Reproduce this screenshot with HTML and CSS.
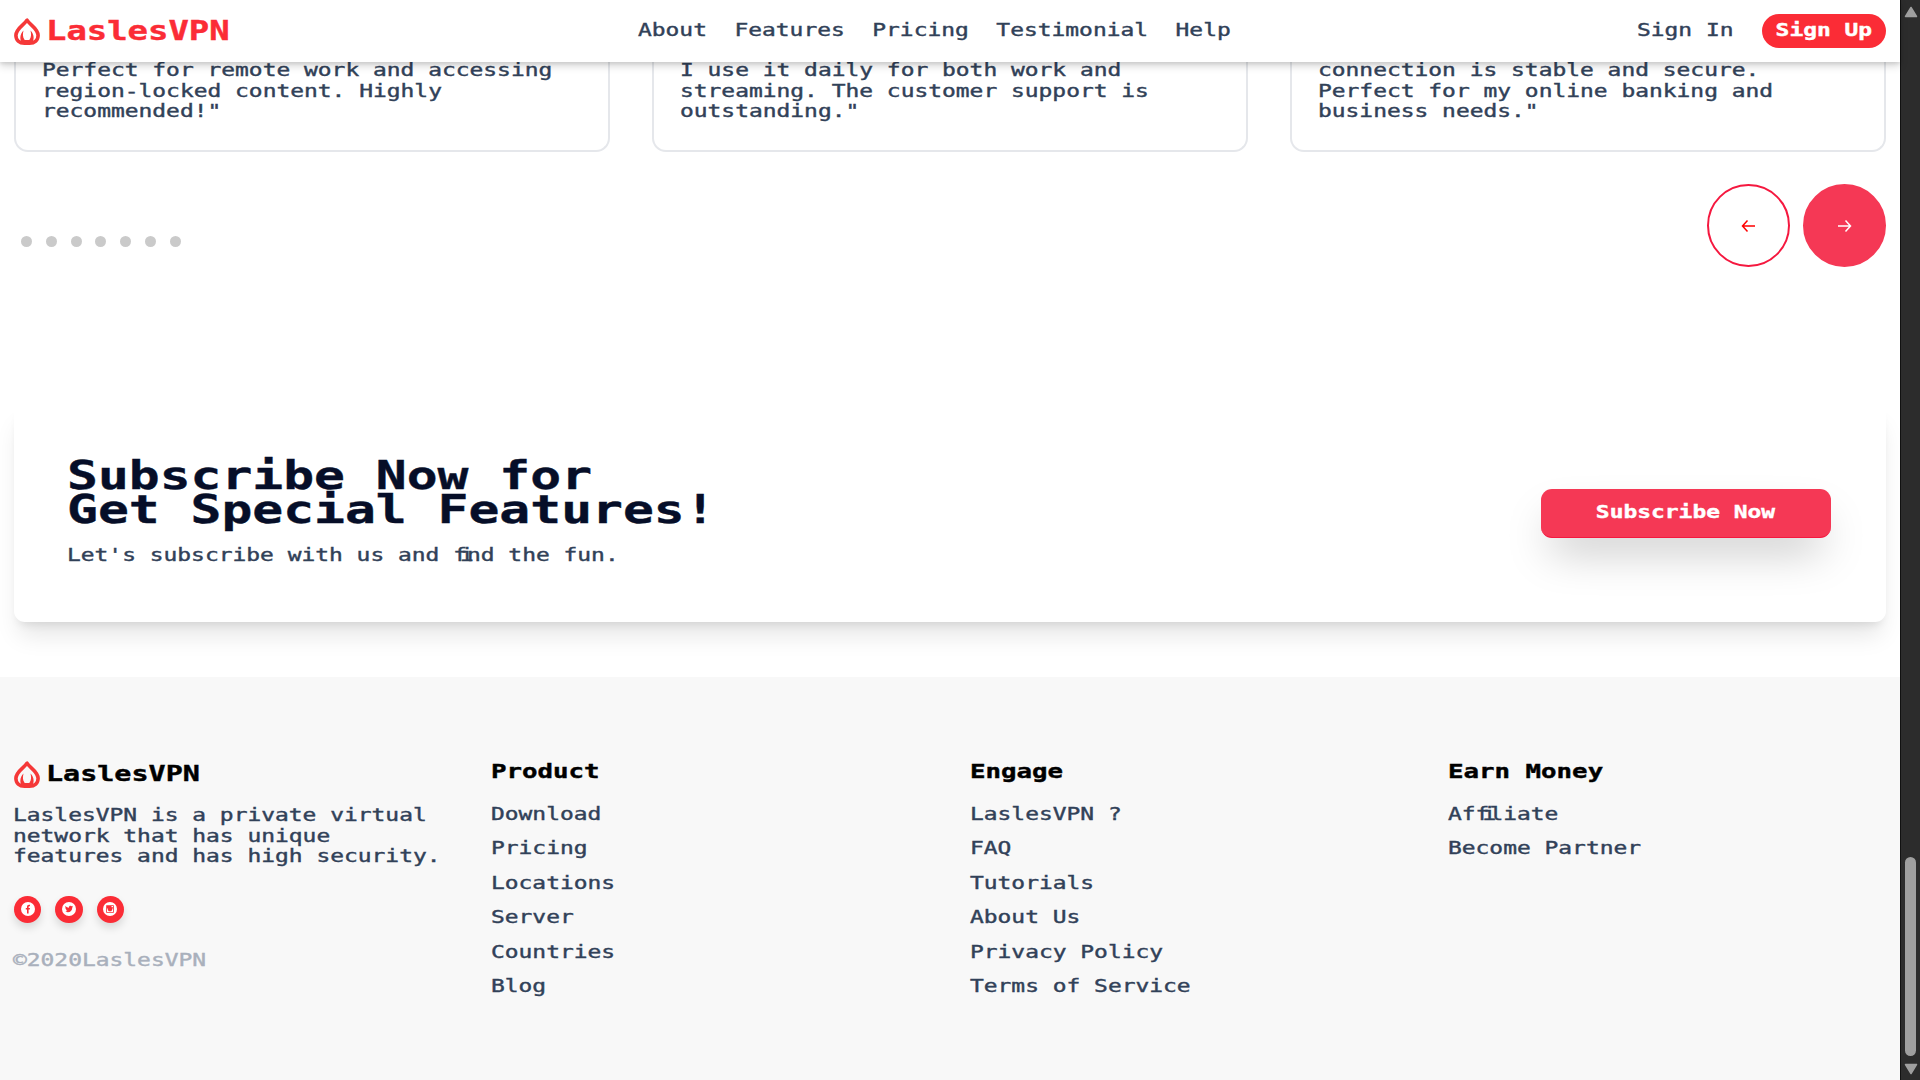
FILE: index.html
```html
<!DOCTYPE html>
<html lang="en">
<head>
<meta charset="utf-8">
<title>LaslesVPN</title>
<link rel="stylesheet" href="styles.css">
</head>
<body>
<svg class="defs" width="0" height="0">
  <symbol id="flame" viewBox="0 0 26 27">
    <path d="M13 2.200C10.500 6.500 1.900 10.500 1.900 17.300c0 5 3.500 7.900 8.500 7.900h5.200c5 0 8.500-2.900 8.500-7.900C24.100 10.500 15.500 6.500 13 2.200z" fill="none" stroke="currentColor" stroke-width="3.600" stroke-linejoin="round"/>
    <path d="M9.500 12.500C5.500 16.500 5.500 22 8.500 26h9c3-4 3-9.500-1-13.500.8 3.500 1 6.500-1.200 9.500h-4.600C8.500 19 8.700 16 9.500 12.500z" fill="currentColor"/>
  </symbol>
</svg>
<div class="screen">
  <div class="page">
    <header class="header">
      <a class="brand"><svg class="flame"><use href="#flame"/></svg><span class="type brand-name">LaslesVPN</span></a>
      <nav class="type nav"><a>About</a><a>Features</a><a>Pricing</a><a>Testimonial</a><a>Help</a></nav>
      <div class="auth"><a class="type sign-in">Sign In</a><a class="sign-up"><span class="type">Sign Up</span></a></div>
    </header>
    <main class="main">
      <section class="cards">
        <article class="card"><p class="type">Perfect for remote work and accessing<br>region-locked content. Highly<br>recommended!"</p></article>
        <article class="card"><p class="type">I use it daily for both work and<br>streaming. The customer support is<br>outstanding."</p></article>
        <article class="card"><p class="type">connection is stable and secure.<br>Perfect for my online banking and<br>business needs."</p></article>
      </section>
      <section class="pager">
        <div class="dots"><i></i><i></i><i></i><i></i><i></i><i></i><i></i></div>
        <div class="arrows">
          <button class="arrow prev"><svg viewBox="0 0 14 14"><path d="M13.500 7H1M6 1.500L1 7l5 5.500"/></svg></button>
          <button class="arrow next"><svg viewBox="0 0 14 14"><path d="M.5 7H13M8 1.500L13 7l-5 5.500"/></svg></button>
        </div>
      </section>
      <section class="subscribe">
        <div>
          <h2 class="type">Subscribe Now for<br>Get Special Features!</h2>
          <p class="type">Let's subscribe with us and <span class="lig">fi</span>nd the fun.</p>
        </div>
        <button class="subscribe-button"><span class="type">Subscribe Now</span></button>
      </section>
    </main>
    <footer class="footer">
      <div class="about">
        <a class="brand"><svg class="flame"><use href="#flame"/></svg><span class="type brand-name">LaslesVPN</span></a>
        <p class="type">LaslesVPN is a private virtual<br>network that has unique<br>features and has high security.</p>
        <div class="socials">
          <a><svg viewBox="0 0 14 14"><circle cx="7" cy="7" r="7"/><path d="M6 11.500V7.600H4.800V6H6V4.800C6 3.400 6.800 2.700 8 2.700h1v1.500h-.7c-.5 0-.7.3-.7.8v1H9l-.2 1.600H7.600v3.900z"/></svg></a>
          <a><svg viewBox="0 0 14 14"><circle cx="7" cy="7" r="7"/><path d="M3.500 4c1 1.100 2.100 1.600 3.400 1.700C6.800 4.300 7.700 3.700 8.500 3.700c.5 0 .9.200 1.200.5l1-.4-.4.9.7-.1-.7.800c0 3-2 4.900-4.400 4.900-.9 0-1.800-.3-2.500-.8.8 0 1.500-.2 2-.7-.8-.1-1.200-.5-1.400-1.100h.6c-.8-.3-1.200-.9-1.200-1.700l.6.2c-.7-.6-.9-1.400-.5-2.200z"/></svg></a>
          <a><svg viewBox="0 0 14 14"><circle cx="7" cy="7" r="7"/><path fill-rule="evenodd" d="M3.200 3.200h7.600v7.600H3.200zM4 6.400V10h6V6.400H9.200a2.300 2.300 0 1 1-4.400 0zM8.500 3.900v1.300H10V3.900z"/></svg></a>
        </div>
        <p class="type copyright">©2020LaslesVPN</p>
      </div>
      <div class="links">
        <h3 class="type">Product</h3>
        <ul class="type"><li>Download</li><li>Pricing</li><li>Locations</li><li>Server</li><li>Countries</li><li>Blog</li></ul>
      </div>
      <div class="links">
        <h3 class="type">Engage</h3>
        <ul class="type"><li>LaslesVPN ?</li><li>FAQ</li><li>Tutorials</li><li>About Us</li><li>Privacy Policy</li><li>Terms of Service</li></ul>
      </div>
      <div class="links">
        <h3 class="type">Earn Money</h3>
        <ul class="type"><li>Af<span class="lig">fi</span>liate</li><li>Become Partner</li></ul>
      </div>
    </footer>
  </div>
  <aside class="scrollbar">
    <svg viewBox="0 0 14 12"><path d="M7 1.500L12.500 10.500H1.500z"/></svg>
    <div class="thumb"></div>
    <svg viewBox="0 0 14 12"><path d="M7 10.500L12.500 1.500H1.500z"/></svg>
  </aside>
</div>
</body>
</html>
```
FILE: styles.css
```css
* { box-sizing: border-box; margin: 0; padding: 0; }
body {
  font: 17.5px/20.5px "DejaVu Sans Mono", monospace;
  color: #314158;
  background: #fff;
  overflow: hidden;
}
button { border: 0; font: inherit; }
ul { list-style: none; }
.defs { display: block; }

/* Wide letterforms: every run of text is widened from its left edge. */
.type {
  display: block;
  width: max-content;
  white-space: nowrap;
  transform: scaleX(1.309);
  transform-origin: left;
  -webkit-text-stroke: 0.4px currentColor;
}
.lig { letter-spacing: -0.301em; }

.screen { display: flex; width: 1920px; height: 1080px; }
.page { display: flex; flex-direction: column; width: 1900px; }

.header {
  position: relative;
  z-index: 1;
  display: grid;
  grid-template-columns: 624px 1fr 249px;
  align-items: center;
  height: 62px;
  padding: 0 14px;
  background: #fff;
  box-shadow: 0 4px 8px rgba(0, 0, 0, .16), 0 2px 3px rgba(0, 0, 0, .08);
}
.brand { display: flex; align-items: center; gap: 6px; color: #fb2c36; }
.flame { width: 26px; height: 27px; color: #f53838; }
.brand-name { font-size: 25.900px; font-weight: 700; line-height: 28px; padding-bottom: 1px; }
.nav { display: flex; gap: 21px; }
.nav, .sign-in { padding-bottom: 2px; }
.auth { display: flex; align-items: center; justify-content: space-between; }
.sign-up {
  display: flex;
  justify-content: center;
  align-items: center;
  width: 124px;
  height: 34px;
  padding-bottom: 2px;
  border-radius: 17px;
  background: #fb2c36;
  color: #fff;
  font-weight: 700;
}
.sign-up .type, .subscribe-button .type { transform-origin: center; }

.main { height: 615px; }
.cards { display: grid; grid-template-columns: repeat(3, 596px); gap: 42px; padding: 0 14px; }
.card {
  height: 90px;
  padding: 0 26px;
  border: 2px solid #e5e7eb;
  border-top: 0;
  border-radius: 0 0 14px 14px;
}
.card .type { margin-top: -2px; }

.pager { display: flex; justify-content: space-between; padding: 32px 14px 0 21px; }
.dots { display: flex; gap: 13.800px; padding-top: 52px; }
.dots i { width: 11px; height: 11px; border-radius: 50%; background: #cacaca; }
.arrows { display: flex; gap: 13px; }
.arrow {
  display: flex;
  align-items: center;
  justify-content: center;
  width: 83px;
  height: 83px;
  border: 2px solid #f5183f;
  border-radius: 50%;
  background: #fff;
  color: #f00;
}
.arrow svg { width: 15px; height: 14px; fill: none; stroke: currentColor; stroke-width: 1.500; }
.next { border-color: #f53855; background: #f53855; color: #fff; }

.subscribe {
  display: flex;
  justify-content: space-between;
  height: 218px;
  margin: 137px 14px 0;
  padding: 55px 55px 0 53px;
  border-radius: 11px;
  box-shadow: 0 18px 24px -5px rgba(0, 0, 0, .1), 0 7px 10px -5px rgba(0, 0, 0, .1);
}
.subscribe h2 { font-size: 39.200px; font-weight: 700; line-height: 34px; color: #060e28; }
.subscribe p { margin-top: 18px; }
.subscribe-button {
  display: flex;
  align-items: center;
  justify-content: center;
  width: 290px;
  height: 49px;
  margin-top: 30px;
  padding: 0 2px 1px 0;
  border-radius: 11px;
  background: #f53855;
  box-shadow: 0 22px 44px -10px rgba(0, 0, 0, .25);
  border-bottom: 1px solid #f5183f;
  color: #fff;
  font-weight: 700;
}

.footer {
  display: grid;
  grid-template-columns: 477px 479px 478px 1fr;
  height: 403px;
  padding: 83px 14px 0;
  background: #f8f8f8;
}
.footer .brand-name { font-size: 21.700px; color: #000; }
.about p { margin-top: 16px; margin-left: -1px; }
.about .copyright { margin-top: 27px; color: #a9b0bc; }
.socials { display: flex; gap: 14px; margin-top: 29px; }
.socials a {
  display: flex;
  align-items: center;
  justify-content: center;
  width: 27.300px;
  height: 27.300px;
  border-radius: 50%;
  background: #fb2c36;
  box-shadow: 0 5px 9px rgba(0, 0, 0, .13);
}
.socials svg { width: 14px; height: 14px; fill: #fb2c36; }
.socials circle:first-child { fill: #fff; }
.links h3 { font-size: 19.700px; font-weight: 700; line-height: 24px; color: #000; }
.links ul { margin-top: 13px; line-height: 34.400px; }

.scrollbar {
  display: flex;
  flex-direction: column;
  align-items: center;
  width: 20px;
  padding: 6px 0 5px;
  border-left: 1px solid #111;
  background: #2c2c2c;
}
.scrollbar svg { width: 14px; height: 12px; fill: #9f9f9f; stroke: #9f9f9f; stroke-width: 1.500; stroke-linejoin: round; }
.thumb { width: 11px; height: 199px; margin: auto 0 7px; border-radius: 6px; background: #9f9f9f; }
```
